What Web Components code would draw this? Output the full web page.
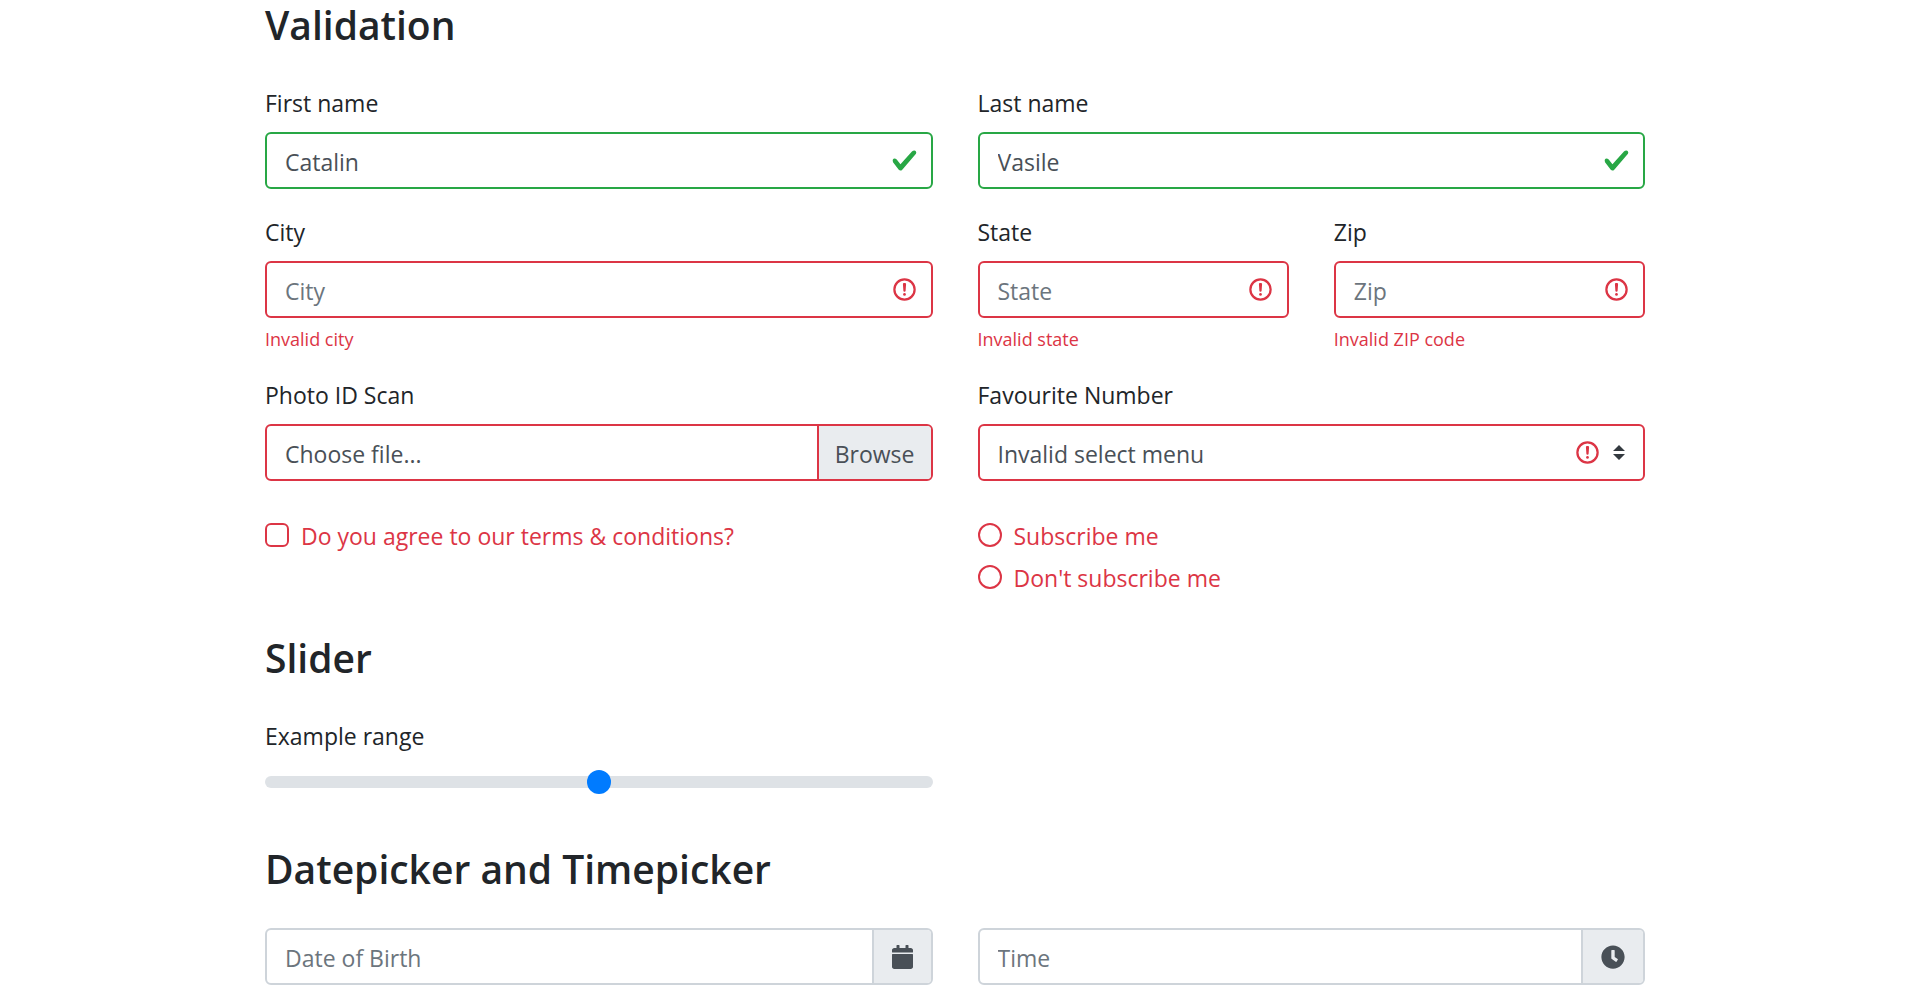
<!DOCTYPE html>
<html lang="en">
<head>
<meta charset="utf-8">
<meta name="viewport" content="width=device-width, initial-scale=1">
<title>Forms</title>
<style>
  body {
    --danger: #dc3545;
    --success: #28a745;
    --border: #ced4da;
    --addon: #e9ecef;
    --muted: #6c757d;
    --text: #495057;
    margin: 0;
    padding: 0 5px 0 0;
    background: #fff;
    color: #212529;
    font: 23px/38px "Segoe UI", "Open Sans", "Noto Sans", sans-serif;
  }
</style>
</head>
<body>
<forms-page></forms-page>
<script>
(() => {
  const icons = {
    valid: `<svg viewBox="0 0 8 8" width="27" height="27" aria-hidden="true"><path fill="#28a745" d="M2.3 6.73L.6 4.53c-.4-1.04.46-1.4 1.1-.8l1.1 1.4 3.4-3.8c.6-.63 1.6-.27 1.2.7l-4 4.6c-.43.5-.8.4-1.1.1z"/></svg>`,
    invalid: `<svg viewBox="0 0 12 12" width="27" height="27" aria-hidden="true" fill="none" stroke="#dc3545"><circle cx="6" cy="6" r="4.5"/><path stroke-linejoin="round" d="M5.8 3.6h.4L6 6.5z"/><circle cx="6" cy="8.2" r=".6" fill="#dc3545" stroke="none"/></svg>`,
    arrows: `<svg viewBox="0 0 4 5" width="12" height="15" aria-hidden="true"><path fill="#343a40" d="M2 0L0 2h4zm0 5L0 3h4z"/></svg>`,
    calendar: `<svg viewBox="0 0 448 512" width="21" height="24" aria-hidden="true"><path fill="#495057" d="M12 192h424c6.600 0 12 5.400 12 12v260c0 26.500-21.500 48-48 48H48c-26.500 0-48-21.500-48-48V204c0-6.600 5.400-12 12-12zm436-44v-36c0-26.500-21.500-48-48-48h-48V12c0-6.600-5.400-12-12-12h-40c-6.600 0-12 5.400-12 12v52H160V12c0-6.600-5.400-12-12-12h-40c-6.600 0-12 5.400-12 12v52H48C21.500 64 0 85.500 0 112v36c0 6.600 5.400 12 12 12h424c6.600 0 12-5.400 12-12z"/></svg>`,
    clock: `<svg viewBox="0 0 512 512" width="24" height="24" aria-hidden="true"><path fill="#495057" d="M256 8C119 8 8 119 8 256s111 248 248 248 248-111 248-248S393 8 256 8zm57.100 350.100L224.900 294c-3.100-2.300-4.900-5.900-4.900-9.700V116c0-6.600 5.400-12 12-12h48c6.600 0 12 5.400 12 12v137.700l63.500 46.200c5.400 3.900 6.500 11.400 2.600 16.800l-28.200 38.800c-3.900 5.300-11.400 6.500-16.800 2.600z"/></svg>`
  };

  // Shared by every boxed control
  const boxStyles = `
    :host { display: block; min-width: 0; }
    label { display: block; margin-bottom: 10px; }
    .box { position: relative; display: flex; align-items: center; box-sizing: border-box; height: 57px; border: 2px solid var(--border); border-radius: 6px; background: #fff; color: var(--text); overflow: hidden; }
    .box.valid { border-color: var(--success); }
    .box.invalid { border-color: var(--danger); }
    .box:focus-within { box-shadow: 0 0 0 4px rgba(0,123,255,0.25); }
    input, select { flex: 1; min-width: 0; box-sizing: border-box; height: 100%; margin: 0; padding: 2px 18px 0; border: 0; outline: 0; background: none; color: inherit; font: inherit; }
    input::placeholder { color: var(--muted); opacity: 1; }
    svg { display: block; flex: none; }
  `;

  class TextField extends HTMLElement {
    connectedCallback() {
      const label = this.getAttribute('label');
      const hint = this.getAttribute('placeholder') || '';
      const state = this.getAttribute('state') || '';
      const error = this.getAttribute('error');
      const addon = this.getAttribute('addon');
      this.attachShadow({ mode: 'open' }).innerHTML = `
        <style>
          ${boxStyles}
          .status { padding-right: 13px; }
          .addon { display: flex; align-items: center; align-self: stretch; padding: 0 18px; border: 0; border-left: 2px solid var(--border); background: var(--addon); cursor: pointer; }
          .error { margin-top: 8px; color: var(--danger); font-size: 18px; line-height: 26px; }
        </style>
        ${label ? `<label for="control">${label}</label>` : ''}
        <div class="box ${state}">
          <input id="control" type="text" value="${this.getAttribute('value') || ''}" placeholder="${hint}" ${label ? '' : `aria-label="${hint}"`}>
          ${state ? `<span class="status">${icons[state]}</span>` : ''}
          ${addon ? `<button class="addon" type="button" aria-label="Pick ${hint}">${icons[addon]}</button>` : ''}
        </div>
        ${error ? `<div class="error">${error}</div>` : ''}
      `;
    }
  }

  class FileField extends HTMLElement {
    connectedCallback() {
      this.attachShadow({ mode: 'open' }).innerHTML = `
        <style>
          ${boxStyles}
          .name { flex: 1; padding: 2px 18px 0; }
          .browse { display: flex; align-items: center; align-self: stretch; padding: 2px 16px 0; border-left: 2px solid var(--danger); background: var(--addon); }
          /* the native input covers the drawn one and takes the clicks */
          input { position: absolute; inset: 0; width: 100%; opacity: 0; cursor: pointer; }
        </style>
        <label for="control">${this.getAttribute('label')}</label>
        <div class="box invalid">
          <span class="name">Choose file...</span>
          <span class="browse">Browse</span>
          <input id="control" type="file">
        </div>
      `;
      const name = this.shadowRoot.querySelector('.name');
      this.shadowRoot.querySelector('input').addEventListener('change', e => {
        name.textContent = e.target.files.length ? e.target.files[0].name : 'Choose file...';
      });
    }
  }

  class SelectField extends HTMLElement {
    connectedCallback() {
      this.attachShadow({ mode: 'open' }).innerHTML = `
        <style>
          ${boxStyles}
          select { appearance: none; width: 100%; padding-right: 72px; }
          .marks { position: absolute; right: 18px; display: flex; align-items: center; gap: 12px; pointer-events: none; }
        </style>
        <label for="control">${this.getAttribute('label')}</label>
        <div class="box invalid">
          <select id="control">
            <option>Invalid select menu</option>
            <option>1</option>
            <option>2</option>
            <option>3</option>
          </select>
          <span class="marks">${icons.invalid}${icons.arrows}</span>
        </div>
      `;
    }
  }

  // Options come as a "|" separated list, so radios share one group
  class ChoiceGroup extends HTMLElement {
    connectedCallback() {
      const type = this.getAttribute('type');
      const options = this.getAttribute('options').split('|');
      this.attachShadow({ mode: 'open' }).innerHTML = `
        <style>
          :host { display: flex; flex-direction: column; align-items: flex-start; gap: 4px; color: var(--danger); }
          label { display: flex; align-items: flex-start; gap: 12px; }
          input { appearance: none; flex: none; box-sizing: border-box; width: 24px; height: 24px; margin: 6px 0 0; border: 2px solid var(--danger); border-radius: 6px; background: #fff; }
          input[type=radio] { border-radius: 50%; }
          input:checked { background: var(--danger); box-shadow: inset 0 0 0 4px #fff; }
        </style>
        ${options.map(text => `<label><input type="${type}" name="choice"><span>${text}</span></label>`).join('')}
      `;
    }
  }

  class RangeField extends HTMLElement {
    connectedCallback() {
      this.attachShadow({ mode: 'open' }).innerHTML = `
        <style>
          :host { display: block; padding-bottom: 9px; }
          label { display: block; margin-bottom: 10px; }
          input { appearance: none; display: block; width: 100%; height: 34px; margin: 0; background: none; }
          input::-webkit-slider-runnable-track { height: 12px; border-radius: 12px; background: #dee2e6; }
          input::-webkit-slider-thumb { appearance: none; width: 24px; height: 24px; margin-top: -6px; border-radius: 50%; background: #007bff; }
          input::-moz-range-track { height: 12px; border-radius: 12px; background: #dee2e6; }
          input::-moz-range-thumb { width: 24px; height: 24px; border: 0; border-radius: 50%; background: #007bff; }
        </style>
        <label for="control">${this.getAttribute('label')}</label>
        <input id="control" type="range" min="0" max="100" value="50">
      `;
    }
  }

  class FormSection extends HTMLElement {
    connectedCallback() {
      this.attachShadow({ mode: 'open' }).innerHTML = `
        <style>
          :host { display: block; }
          h2 { margin: 0 0 34px; font-size: 39px; font-weight: 600; line-height: 50px; }
          .rows { display: flex; flex-direction: column; gap: 24px; }
        </style>
        <h2>${this.getAttribute('heading')}</h2>
        <div class="rows"><slot></slot></div>
      `;
    }
  }

  class FormRow extends HTMLElement {
    connectedCallback() {
      this.attachShadow({ mode: 'open' }).innerHTML = `
        <style>
          :host { display: grid; grid-template-columns: 1fr 1fr; gap: 0 45px; }
          ::slotted(form-row) { min-width: 0; }
        </style>
        <slot></slot>
      `;
    }
  }

  class FormsPage extends HTMLElement {
    connectedCallback() {
      this.attachShadow({ mode: 'open' }).innerHTML = `
        <style>
          :host { display: block; }
          main { box-sizing: border-box; max-width: 1420px; margin: 0 auto; padding: 0 20px; }
          form { display: flex; flex-direction: column; gap: 36px; }
          .choices { padding-top: 12px; }
        </style>
        <main>
          <form>
            <form-section heading="Validation">
              <form-row>
                <text-field label="First name" value="Catalin" state="valid"></text-field>
                <text-field label="Last name" value="Vasile" state="valid"></text-field>
              </form-row>
              <form-row>
                <text-field label="City" placeholder="City" state="invalid" error="Invalid city"></text-field>
                <form-row>
                  <text-field label="State" placeholder="State" state="invalid" error="Invalid state"></text-field>
                  <text-field label="Zip" placeholder="Zip" state="invalid" error="Invalid ZIP code"></text-field>
                </form-row>
              </form-row>
              <form-row>
                <file-field label="Photo ID Scan"></file-field>
                <select-field label="Favourite Number"></select-field>
              </form-row>
              <form-row class="choices">
                <choice-group type="checkbox" options="Do you agree to our terms &amp;amp; conditions?"></choice-group>
                <choice-group type="radio" options="Subscribe me|Don't subscribe me"></choice-group>
              </form-row>
            </form-section>
            <form-section heading="Slider">
              <form-row>
                <range-field label="Example range"></range-field>
              </form-row>
            </form-section>
            <form-section heading="Datepicker and Timepicker">
              <form-row>
                <text-field placeholder="Date of Birth" addon="calendar"></text-field>
                <text-field placeholder="Time" addon="clock"></text-field>
              </form-row>
            </form-section>
          </form>
        </main>
      `;
    }
  }

  customElements.define('text-field', TextField);
  customElements.define('file-field', FileField);
  customElements.define('select-field', SelectField);
  customElements.define('choice-group', ChoiceGroup);
  customElements.define('range-field', RangeField);
  customElements.define('form-section', FormSection);
  customElements.define('form-row', FormRow);
  customElements.define('forms-page', FormsPage);
})();
</script>
</body>
</html>
